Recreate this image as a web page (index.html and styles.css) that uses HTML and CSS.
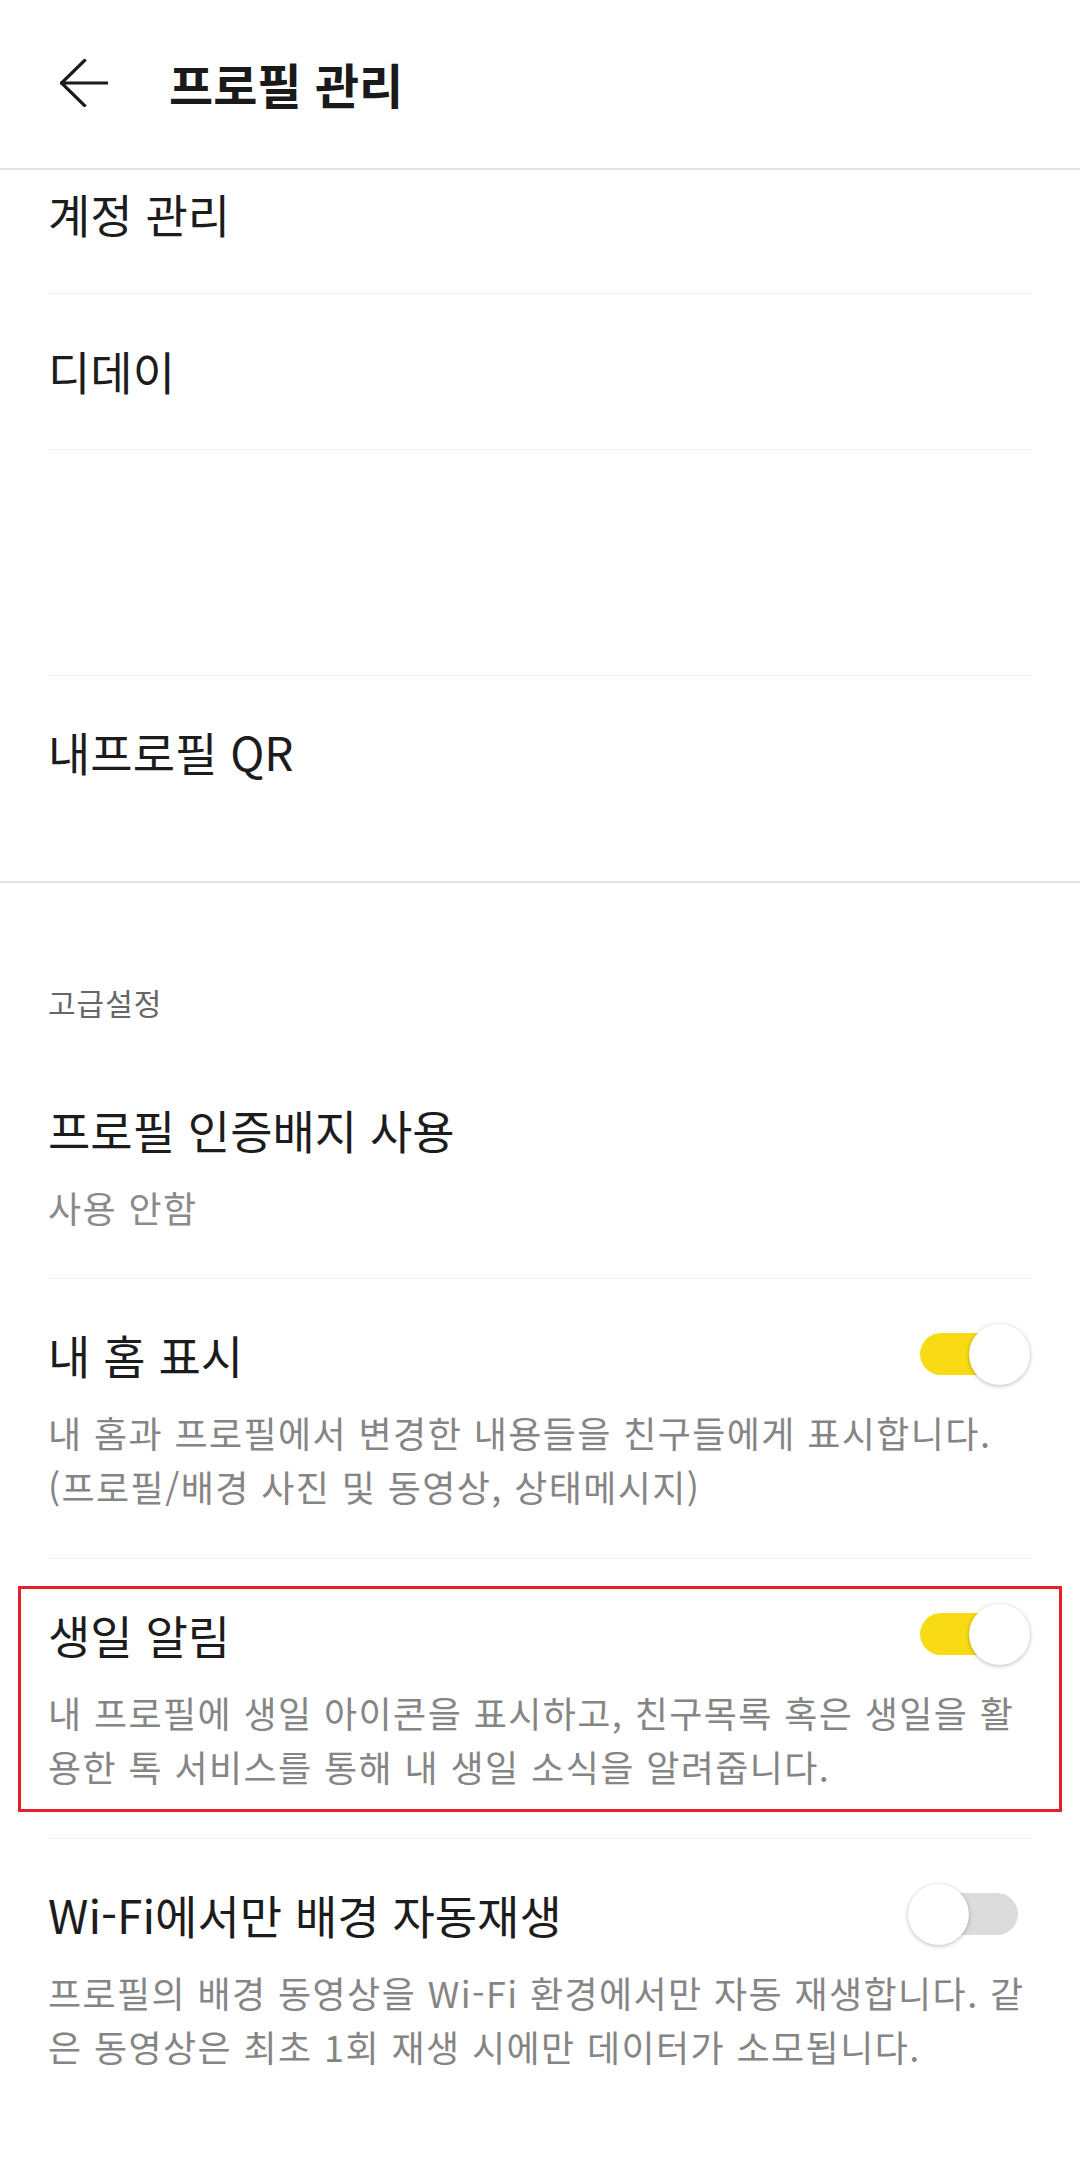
FILE: index.html
```html
<!DOCTYPE html>
<html lang="ko">
<head>
<meta charset="utf-8">
<title>프로필 관리</title>
<link rel="stylesheet" href="styles.css">
</head>
<body>
<header class="appbar">
  <svg class="back" width="48" height="48" viewBox="0 0 48 48" aria-hidden="true">
    <path d="M48 24 H1.5 M24.5 1.5 L1.5 24 L24.5 46.5" fill="none" stroke="#1a1a1a" stroke-width="3.2" stroke-linecap="square" stroke-linejoin="miter"/>
  </svg>
  <h1 class="appbar-title">프로필 관리</h1>
</header>

<main>
  <section class="group group-basic">
    <div class="row row-first"><span class="row-title">계정 관리</span></div>
    <div class="row"><span class="row-title">디데이</span></div>
    <div class="row row-blank"></div>
    <div class="row row-last"><span class="row-title">내프로필 QR</span></div>
  </section>

  <section class="group group-advanced">
    <div class="group-label">고급설정</div>

    <div class="row row-setting">
      <div class="row-head"><span class="row-title">프로필 인증배지 사용</span></div>
      <p class="row-desc row-value">사용 안함</p>
    </div>

    <div class="row row-setting">
      <div class="row-head">
        <span class="row-title">내 홈 표시</span>
        <span class="switch on"><span class="track"></span><span class="thumb"></span></span>
      </div>
      <p class="row-desc"><span class="line">내 홈과 프로필에서 변경한 내용들을 친구들에게 표시합니다.</span><span class="line">(프로필/배경 사진 및 동영상, 상태메시지)</span></p>
    </div>

    <div class="row row-setting highlighted">
      <div class="row-head">
        <span class="row-title">생일 알림</span>
        <span class="switch on"><span class="track"></span><span class="thumb"></span></span>
      </div>
      <p class="row-desc"><span class="line">내 프로필에 생일 아이콘을 표시하고, 친구목록 혹은 생일을 활</span><span class="line">용한 톡 서비스를 통해 내 생일 소식을 알려줍니다.</span></p>
      <span class="highlight-box"></span>
    </div>

    <div class="row row-setting row-end">
      <div class="row-head">
        <span class="row-title">Wi-Fi에서만 배경 자동재생</span>
        <span class="switch off"><span class="track"></span><span class="thumb"></span></span>
      </div>
      <p class="row-desc"><span class="line">프로필의 배경 동영상을 Wi-Fi 환경에서만 자동 재생합니다. 같</span><span class="line">은 동영상은 최초 1회 재생 시에만 데이터가 소모됩니다.</span></p>
    </div>
  </section>
</main>
</body>
</html>
```

FILE: styles.css
```css
* { box-sizing: border-box; }

html, body {
  margin: 0;
  padding: 0;
  background: #ffffff;
}

body {
  width: 1080px;
  height: 2168px;
  overflow: hidden;
  font-family: "Noto Sans CJK KR", "Noto Sans", "Liberation Sans", sans-serif;
  color: #1c1c1c;
}

/* ---------- app bar ---------- */
.appbar {
  height: 170px;
  display: flex;
  align-items: center;
  padding-left: 60px;
  padding-bottom: 2px;
  border-bottom: 2px solid #e2e2e2;
}

.back {
  flex: none;
  display: block;
}

.appbar-title {
  margin: 0 0 0 61px;
  font-size: 48px;
  line-height: 60px;
  font-weight: 700;
  color: #1a1a1a;
}

/* ---------- groups ---------- */
.group {
  padding: 0 48px;
}

.group-basic {
  border-bottom: 2px solid #e2e2e2;
}

.row {
  border-bottom: 1px solid #f3f3f3;
  padding: 48px 0 51px;
}

.row-first {
  padding-top: 15px;
  padding-bottom: 52px;
}

.row-blank {
  height: 226px;
  padding: 0;
}

.row-last {
  border-bottom: none;
  padding-top: 47px;
  padding-bottom: 102px;
}

.row-title {
  display: block;
  font-size: 46px;
  line-height: 56px;
  font-weight: 400;
  color: #1c1c1c;
  white-space: nowrap;
}

.group-label {
  padding-top: 99px;
  font-size: 30px;
  line-height: 40px;
  letter-spacing: 1px;
  color: #666666;
}

/* ---------- setting rows ---------- */
.row-setting {
  position: relative;
  padding: 47px 0 45px;
}

.group-label + .row-setting {
  padding-top: 79px;
  padding-bottom: 44px;
}

.row-end {
  border-bottom: none;
}

.row-head {
  display: flex;
  align-items: center;
  justify-content: space-between;
  height: 56px;
}

.row-desc {
  margin: 23px 0 0;
  font-size: 36px;
  line-height: 54px;
  letter-spacing: 1.4px;
  color: #858585;
  white-space: nowrap;
}

.row-desc .line {
  display: block;
}

.row-value {
  color: #8a8a8a;
}

/* ---------- switch ---------- */
.switch {
  position: relative;
  flex: none;
  width: 122px;
  height: 56px;
  margin-right: 2px;
}

.switch .track {
  position: absolute;
  left: 12px;
  top: 7px;
  width: 98px;
  height: 42px;
  border-radius: 21px;
  background: #dcdcdc;
}

.switch.on .track {
  background: #f8db14;
}

.switch .thumb {
  position: absolute;
  top: -2px;
  width: 61px;
  height: 61px;
  border-radius: 50%;
  background: #ffffff;
  box-shadow: 0 1px 4px rgba(0, 0, 0, 0.28);
}

.switch.on .thumb {
  right: 0;
}

.switch.off .thumb {
  left: 0;
}

/* ---------- annotation ---------- */
.highlight-box {
  position: absolute;
  left: -30px;
  top: 27px;
  width: 1044px;
  height: 226px;
  border: 3px solid #e3202b;
  pointer-events: none;
}
```
